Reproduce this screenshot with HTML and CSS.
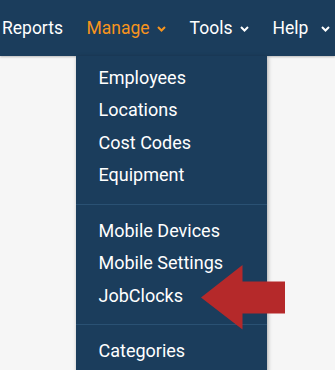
FILE: index.html
```
<!DOCTYPE html>
<html>

	<head>
		<meta charset="UTF-8">
		<title>Manage menu</title>
		<link rel="stylesheet" href="styles.css">
	</head>

	<body>
		<div class="navbar">
			<a href="javascript:;" class="nav-link">Reports</a>
			<div class="nav-item open">
				<a href="javascript:;" class="nav-link">Manage<svg class="caret" width="9" height="6" viewBox="0 0 9 6"><polyline points="1,1 4.5,4.5 8,1" fill="none" stroke="currentColor" stroke-width="2"/></svg></a>
				<ul class="dropdown">
					<li class="item"><a href="">Employees</a></li>
					<li class="item"><a href="">Locations</a></li>
					<li class="item"><a href="">Cost Codes</a></li>
					<li class="item"><a href="">Equipment</a></li>
					<li class="divider"></li>
					<li class="item"><a href="">Mobile Devices</a></li>
					<li class="item"><a href="">Mobile Settings</a></li>
					<li class="item"><a href="">JobClocks</a></li>
					<li class="divider"></li>
					<li class="item"><a href="">Categories</a></li>
				</ul>
			</div>
			<a href="javascript:;" class="nav-link">Tools<svg class="caret" width="9" height="6" viewBox="0 0 9 6"><polyline points="1,1 4.5,4.5 8,1" fill="none" stroke="currentColor" stroke-width="2"/></svg></a>
			<a href="javascript:;" class="nav-link help">Help<svg class="caret" width="9" height="6" viewBox="0 0 9 6"><polyline points="1,1 4.5,4.5 8,1" fill="none" stroke="currentColor" stroke-width="2"/></svg></a>
		</div>

		<!-- pointer arrow -->
		<svg class="pointer" width="84" height="66" viewBox="0 0 84 66">
			<polygon points="0,32.5 41.5,0 41.5,16.5 84,16.5 84,48.5 41.5,48.5 41.5,64.5" fill="#b5292a"/>
		</svg>
	</body>

</html>
```
FILE: styles.css
```
html,
body {
	margin: 0;
	padding: 0;
}

body {
	height: 370px;
	overflow: hidden;
	background-color: #f6f6f6;
	font-family: Roboto, "Liberation Sans", sans-serif;
	font-size: 18px;
}

a {
	text-decoration: none;
}

ul {
	padding: 0;
	margin: 0;
	list-style-type: none;
}

.navbar {
	display: flex;
	align-items: center;
	height: 56px;
	padding-left: 2px;
	background-color: #1b3d5c;
	box-shadow: 0 1px 2px rgba(0, 0, 0, .25);
}

.nav-link {
	display: flex;
	align-items: center;
	color: #fff;
	font-size: 17.5px;
	line-height: 56px;
	margin-right: 23.5px;
}

.caret {
	margin-left: 7.5px;
	margin-top: 2px;
}

.help .caret {
	margin-left: 13px;
}

.nav-item {
	position: relative;
}

.nav-item.open > .nav-link {
	color: #f7941d;
}

.dropdown {
	position: absolute;
	top: 56px;
	left: -11px;
	width: 191px;
	padding: 5.5px 0;
	background-color: #1b3d5c;
	box-shadow: 1px 1px 4px rgba(0, 0, 0, .3);
	z-index: 2;
}

.dropdown .item a {
	display: block;
	padding-left: 23px;
	line-height: 32.5px;
	color: #fff;
}

.dropdown .divider {
	height: 1px;
	margin: 12px 0 10px;
	background-color: #2a5173;
}

.pointer {
	position: absolute;
	left: 201px;
	top: 265px;
	z-index: 3;
}
```
